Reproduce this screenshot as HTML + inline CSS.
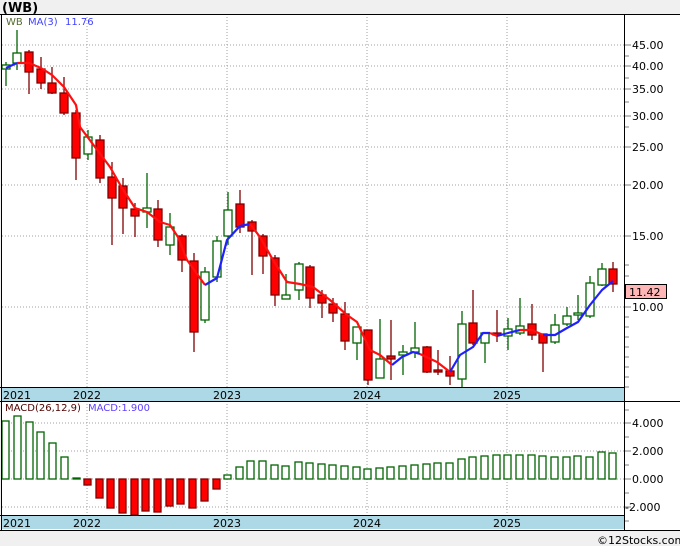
<!DOCTYPE html>
<html><head><meta charset="utf-8"><style>
html,body{margin:0;padding:0;background:#f0f0f0;width:680px;height:546px;overflow:hidden}
svg{display:block}
text{font-family:"DejaVu Sans","Liberation Sans",sans-serif}
</style></head><body>
<svg width="680" height="546" xmlns="http://www.w3.org/2000/svg">
<rect x="0" y="0" width="680" height="546" fill="#f0f0f0"/>
<text x="2" y="12" font-size="13" font-weight="bold" fill="#000">(WB)</text>
<rect x="1" y="14" width="679" height="516" fill="#fff"/>
<g stroke="#a0a0a0" stroke-dasharray="1,2" stroke-width="1">
<line x1="2" y1="45" x2="624" y2="45"/><line x1="2" y1="66" x2="624" y2="66"/><line x1="2" y1="89" x2="624" y2="89"/><line x1="2" y1="116" x2="624" y2="116"/><line x1="2" y1="147" x2="624" y2="147"/><line x1="2" y1="185" x2="624" y2="185"/><line x1="2" y1="236" x2="624" y2="236"/><line x1="2" y1="307" x2="624" y2="307"/>
<line x1="87" y1="14" x2="87" y2="387"/><line x1="227" y1="14" x2="227" y2="387"/><line x1="367" y1="14" x2="367" y2="387"/><line x1="507" y1="14" x2="507" y2="387"/>
<line x1="2" y1="423" x2="624" y2="423"/><line x1="2" y1="451" x2="624" y2="451"/><line x1="2" y1="479" x2="624" y2="479"/><line x1="2" y1="507" x2="624" y2="507"/>
<line x1="87" y1="401" x2="87" y2="515"/><line x1="227" y1="401" x2="227" y2="515"/><line x1="367" y1="401" x2="367" y2="515"/><line x1="507" y1="401" x2="507" y2="515"/>
</g>
<g id="candles" stroke-width="1.3"></g>
<g stroke-width="1.3">
<!-- candles -->
<g fill="#fff" stroke="#006400">
<line x1="6" y1="62" x2="6" y2="86"/><rect x="2" y="65" width="8" height="4"/>
<line x1="17" y1="30" x2="17" y2="70"/><rect x="13" y="53" width="8" height="10"/>
<line x1="88" y1="130" x2="88" y2="160"/><rect x="84" y="137" width="8" height="17"/>
<line x1="147" y1="173" x2="147" y2="228"/><rect x="143" y="208" width="8" height="4"/>
<line x1="170" y1="213" x2="170" y2="255"/><rect x="166" y="227" width="8" height="18"/>
<line x1="205" y1="267" x2="205" y2="323"/><rect x="201" y="272" width="8" height="48"/>
<line x1="217" y1="236" x2="217" y2="282"/><rect x="213" y="241" width="8" height="36"/>
<line x1="228" y1="192" x2="228" y2="245"/><rect x="224" y="210" width="8" height="26"/>
<line x1="286" y1="274" x2="286" y2="299"/><rect x="282" y="295" width="8" height="4"/>
<line x1="299" y1="262" x2="299" y2="300"/><rect x="295" y="264" width="8" height="26"/>
<line x1="357" y1="327" x2="357" y2="360"/><rect x="353" y="327" width="8" height="16"/>
<line x1="380" y1="319" x2="380" y2="378"/><rect x="376" y="359" width="8" height="19"/>
<line x1="403" y1="345" x2="403" y2="375"/><rect x="399" y="352" width="8" height="3"/>
<line x1="415" y1="322" x2="415" y2="358"/><rect x="411" y="348" width="8" height="4"/>
<line x1="462" y1="311" x2="462" y2="388"/><rect x="458" y="324" width="8" height="55"/>
<line x1="485" y1="332" x2="485" y2="363"/><rect x="481" y="333" width="8" height="10"/>
<line x1="508" y1="318" x2="508" y2="350"/><rect x="504" y="329" width="8" height="7"/>
<line x1="520" y1="298" x2="520" y2="335"/><rect x="516" y="326" width="8" height="7"/>
<line x1="555" y1="314" x2="555" y2="344"/><rect x="551" y="325" width="8" height="17"/>
<line x1="567" y1="307" x2="567" y2="326"/><rect x="563" y="316" width="8" height="8"/>
<line x1="578" y1="295" x2="578" y2="320"/><rect x="574" y="313" width="8" height="2"/>
<line x1="590" y1="276" x2="590" y2="318"/><rect x="586" y="283" width="8" height="33"/>
<line x1="602" y1="263" x2="602" y2="286"/><rect x="598" y="269" width="8" height="16"/>
</g>
<g fill="#f00" stroke="#800000">
<line x1="29" y1="50" x2="29" y2="94"/><rect x="25" y="52" width="8" height="20"/>
<line x1="41" y1="57" x2="41" y2="89"/><rect x="37" y="69" width="8" height="14"/>
<line x1="52" y1="67" x2="52" y2="94"/><rect x="48" y="83" width="8" height="10"/>
<line x1="64" y1="77" x2="64" y2="115"/><rect x="60" y="93" width="8" height="20"/>
<line x1="76" y1="110" x2="76" y2="180"/><rect x="72" y="113" width="8" height="45"/>
<line x1="100" y1="135" x2="100" y2="183"/><rect x="96" y="140" width="8" height="38"/>
<line x1="112" y1="162" x2="112" y2="245"/><rect x="108" y="177" width="8" height="21"/>
<line x1="123" y1="178" x2="123" y2="234"/><rect x="119" y="186" width="8" height="22"/>
<line x1="135" y1="203" x2="135" y2="237"/><rect x="131" y="209" width="8" height="7"/>
<line x1="158" y1="200" x2="158" y2="247"/><rect x="154" y="209" width="8" height="31"/>
<line x1="182" y1="234" x2="182" y2="272"/><rect x="178" y="236" width="8" height="24"/>
<line x1="194" y1="253" x2="194" y2="352"/><rect x="190" y="261" width="8" height="71"/>
<line x1="240" y1="190" x2="240" y2="233"/><rect x="236" y="204" width="8" height="23"/>
<line x1="252" y1="220" x2="252" y2="275"/><rect x="248" y="222" width="8" height="9"/>
<line x1="263" y1="234" x2="263" y2="274"/><rect x="259" y="236" width="8" height="20"/>
<line x1="275" y1="255" x2="275" y2="306"/><rect x="271" y="258" width="8" height="37"/>
<line x1="310" y1="265" x2="310" y2="308"/><rect x="306" y="267" width="8" height="31"/>
<line x1="322" y1="290" x2="322" y2="318"/><rect x="318" y="295" width="8" height="8"/>
<line x1="333" y1="298" x2="333" y2="322"/><rect x="329" y="304" width="8" height="9"/>
<line x1="345" y1="302" x2="345" y2="350"/><rect x="341" y="314" width="8" height="27"/>
<line x1="368" y1="330" x2="368" y2="385"/><rect x="364" y="330" width="8" height="50"/>
<line x1="391" y1="320" x2="391" y2="380"/><rect x="387" y="356" width="8" height="3"/>
<line x1="427" y1="346" x2="427" y2="373"/><rect x="423" y="347" width="8" height="25"/>
<line x1="438" y1="350" x2="438" y2="375"/><rect x="434" y="370" width="8" height="2"/>
<line x1="450" y1="356" x2="450" y2="385"/><rect x="446" y="371" width="8" height="5"/>
<line x1="473" y1="290" x2="473" y2="345"/><rect x="469" y="323" width="8" height="20"/>
<line x1="497" y1="310" x2="497" y2="342"/><rect x="493" y="333" width="8" height="2"/>
<line x1="532" y1="304" x2="532" y2="340"/><rect x="528" y="324" width="8" height="11"/>
<line x1="543" y1="334" x2="543" y2="372"/><rect x="539" y="334" width="8" height="9"/>
<line x1="613" y1="262" x2="613" y2="292"/><rect x="609" y="269" width="8" height="15"/>
</g>
</g>
<!-- MA -->
<g fill="none" stroke-width="2.2" stroke-linejoin="round">
<polyline stroke="#2020ff" points="6,68 17,63"/>
<polyline stroke="#ff1010" points="17,63 29,63 41,68 52,75 64,87 76,105 80,127 110,167 122,188 135,208 147,212 160,222 170,225 178,237 187,260 205,285"/>
<polyline stroke="#2020ff" points="205,285 217,278 227,240 240,226 250,224"/>
<polyline stroke="#ff1010" points="250,224 260,237 273,260 287,282 300,284 313,287 330,300 347,315 357,322 370,350 380,355 392,365"/>
<polyline stroke="#2020ff" points="392,365 402,357 413,352 420,354"/>
<polyline stroke="#ff1010" points="420,354 437,362 450,372"/>
<polyline stroke="#2020ff" points="450,372 460,355 473,347 483,333 490,333"/>
<polyline stroke="#ff1010" points="490,333 497,336"/>
<polyline stroke="#2020ff" points="497,336 508,333 520,330"/>
<polyline stroke="#ff1010" points="520,330 532,330 543,335"/>
<polyline stroke="#2020ff" points="543,335 555,335 567,328 578,322 590,305 602,290 613,281"/>
</g>
<text x="6" y="25" font-size="10" fill="#556b2f">WB</text>
<text x="28" y="25" font-size="10" fill="#4040ff">MA(3)</text>
<text x="65" y="25" font-size="10" fill="#4040ff">11.76</text>
<!-- MACD bars -->
<g stroke="#006400" fill="#fff" stroke-width="1.3">
<rect x="2" y="421" width="7" height="58"/><rect x="14" y="416" width="7" height="63"/><rect x="26" y="422" width="7" height="57"/><rect x="37" y="432" width="7" height="47"/><rect x="49" y="443" width="7" height="36"/><rect x="61" y="457" width="7" height="22"/><rect x="73" y="478" width="7" height="1" fill="#006400"/>
<rect x="224" y="475" width="7" height="4"/><rect x="236" y="467" width="7" height="12"/><rect x="247" y="461" width="7" height="18"/><rect x="259" y="461" width="7" height="18"/><rect x="271" y="465" width="7" height="14"/><rect x="282" y="466" width="7" height="13"/><rect x="295" y="462" width="7" height="17"/><rect x="306" y="463" width="7" height="16"/><rect x="318" y="464" width="7" height="15"/><rect x="329" y="465" width="7" height="14"/><rect x="341" y="466" width="7" height="13"/><rect x="353" y="467" width="7" height="12"/><rect x="364" y="469" width="7" height="10"/><rect x="376" y="468" width="7" height="11"/><rect x="387" y="467" width="7" height="12"/><rect x="399" y="466" width="7" height="13"/><rect x="411" y="465" width="7" height="14"/><rect x="423" y="464" width="7" height="15"/><rect x="434" y="463" width="7" height="16"/><rect x="446" y="463" width="7" height="16"/><rect x="458" y="459" width="7" height="20"/><rect x="469" y="457" width="7" height="22"/><rect x="481" y="456" width="7" height="23"/><rect x="493" y="455" width="7" height="24"/><rect x="504" y="455" width="7" height="24"/><rect x="516" y="455" width="7" height="24"/><rect x="528" y="455" width="7" height="24"/><rect x="539" y="456" width="7" height="23"/><rect x="551" y="457" width="7" height="22"/><rect x="563" y="457" width="7" height="22"/><rect x="574" y="456" width="7" height="23"/><rect x="586" y="457" width="7" height="22"/><rect x="598" y="452" width="7" height="27"/><rect x="609" y="453" width="7" height="26"/>
</g>
<g stroke="#800000" fill="#f00" stroke-width="1.3">
<rect x="84" y="479" width="7" height="6"/><rect x="96" y="479" width="7" height="19"/><rect x="107" y="479" width="7" height="29"/><rect x="119" y="479" width="7" height="34"/><rect x="131" y="479" width="7" height="36"/><rect x="142" y="479" width="7" height="32"/><rect x="154" y="479" width="7" height="33"/><rect x="166" y="479" width="7" height="27"/><rect x="177" y="479" width="7" height="25"/><rect x="189" y="479" width="7" height="29"/><rect x="201" y="479" width="7" height="22"/><rect x="213" y="479" width="7" height="10"/>
</g>
<text x="5" y="411" font-size="10" fill="#500000">MACD(26,12,9)</text>
<text x="88" y="411" font-size="10" fill="#6040ff">MACD:1.900</text>
<!-- date bands -->
<rect x="1" y="387" width="623" height="14" fill="#add8e6"/>
<rect x="1" y="515" width="623" height="14" fill="#add8e6"/>
<g font-size="11" fill="#000">
<text x="3" y="399">2021</text><text x="73" y="399">2022</text><text x="213" y="399">2023</text><text x="353" y="399">2024</text><text x="493" y="399">2025</text>
<text x="3" y="527">2021</text><text x="73" y="527">2022</text><text x="213" y="527">2023</text><text x="353" y="527">2024</text><text x="493" y="527">2025</text>
</g>
<g stroke="#000" stroke-width="1">
<line x1="0" y1="14.5" x2="680" y2="14.5"/>
<line x1="0" y1="387.5" x2="624" y2="387.5"/>
<line x1="0" y1="401.5" x2="680" y2="401.5"/>
<line x1="0" y1="515.5" x2="624" y2="515.5"/>
<line x1="0" y1="530.5" x2="680" y2="530.5"/>
<line x1="1.5" y1="14" x2="1.5" y2="530"/>
<line x1="624.5" y1="14" x2="624.5" y2="530"/>
</g>
<g stroke="#808080" stroke-width="1">
<line x1="625" y1="45" x2="631" y2="45"/><line x1="625" y1="56" x2="629" y2="56"/><line x1="625" y1="66" x2="631" y2="66"/><line x1="625" y1="78" x2="629" y2="78"/><line x1="625" y1="89" x2="631" y2="89"/><line x1="625" y1="102" x2="629" y2="102"/><line x1="625" y1="116" x2="631" y2="116"/><line x1="625" y1="127" x2="629" y2="127"/><line x1="625" y1="147" x2="631" y2="147"/><line x1="625" y1="185" x2="631" y2="185"/><line x1="625" y1="236" x2="631" y2="236"/><line x1="625" y1="265" x2="629" y2="265"/><line x1="625" y1="276" x2="629" y2="276"/><line x1="625" y1="307" x2="631" y2="307"/><line x1="625" y1="317" x2="629" y2="317"/><line x1="625" y1="327" x2="629" y2="327"/><line x1="625" y1="337" x2="629" y2="337"/><line x1="625" y1="347" x2="629" y2="347"/><line x1="625" y1="357" x2="629" y2="357"/><line x1="625" y1="367" x2="629" y2="367"/><line x1="625" y1="377" x2="629" y2="377"/><line x1="625" y1="387" x2="629" y2="387"/>
<line x1="625" y1="410" x2="629" y2="410"/><line x1="625" y1="423" x2="631" y2="423"/><line x1="625" y1="437" x2="629" y2="437"/><line x1="625" y1="451" x2="631" y2="451"/><line x1="625" y1="465" x2="629" y2="465"/><line x1="625" y1="479" x2="631" y2="479"/><line x1="625" y1="493" x2="629" y2="493"/><line x1="625" y1="507" x2="631" y2="507"/><line x1="625" y1="521" x2="629" y2="521"/>
</g>
<g font-size="11" fill="#000">
<text x="632" y="49">45.00</text><text x="632" y="70">40.00</text><text x="632" y="93">35.00</text><text x="632" y="120">30.00</text><text x="632" y="151">25.00</text><text x="632" y="189">20.00</text><text x="632" y="240">15.00</text><text x="632" y="311">10.00</text>
<text x="632" y="427">4.000</text><text x="632" y="455">2.000</text><text x="632" y="483">0.000</text><text x="625" y="511">-2.000</text>
</g>
<rect x="625.5" y="284.5" width="41" height="14" fill="#ffb6b6" stroke="#000"/>
<text x="629" y="296" font-size="11" fill="#000">11.42</text>
<text x="597" y="544" font-size="11" fill="#000">©12Stocks.com</text>
</svg>
</body></html>
